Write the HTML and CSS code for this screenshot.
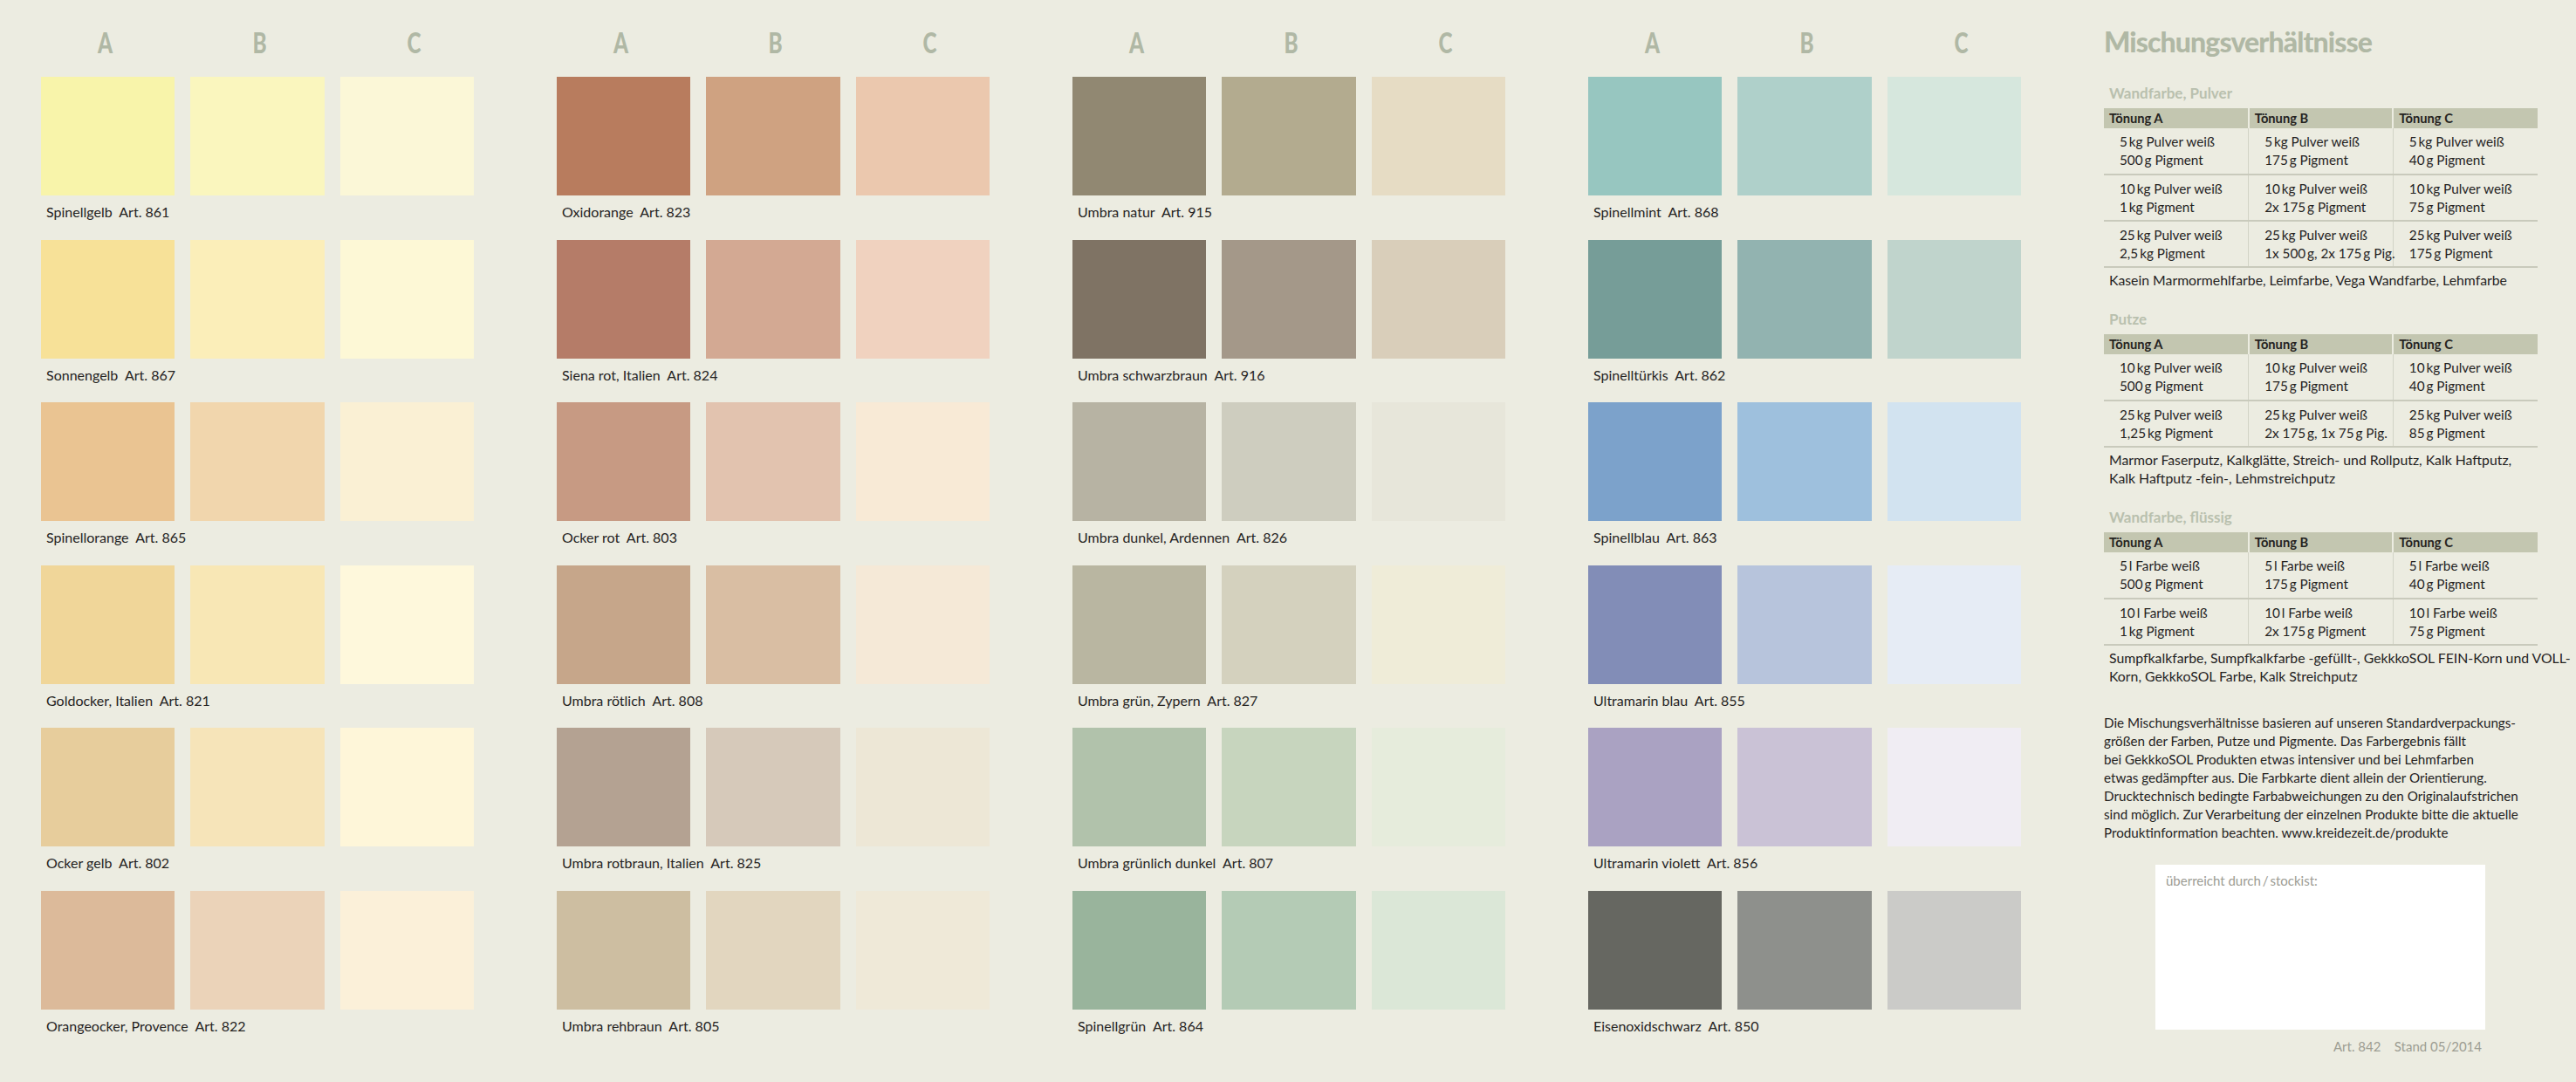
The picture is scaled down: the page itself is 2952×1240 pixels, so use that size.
FILE: index.html
```html
<!DOCTYPE html>
<html lang="de">
<head>
    <meta charset="UTF-8">
    <title>Farbkarte Mischungsverhältnisse</title>
    <link rel="stylesheet" href="styles.css">
</head>
<body>
    <div class="chart">
        <!-- Gelb und Ocker -->
        <section class="palette">
            <div class="palette-head"><span>A</span><span>B</span><span>C</span></div>
            <div class="tone-row"><div class="s861a"></div><div class="s861b"></div><div class="s861c"></div><p class="tone-name">Spinellgelb &nbsp;Art. 861</p></div>
            <div class="tone-row"><div class="s867a"></div><div class="s867b"></div><div class="s867c"></div><p class="tone-name">Sonnengelb &nbsp;Art. 867</p></div>
            <div class="tone-row"><div class="s865a"></div><div class="s865b"></div><div class="s865c"></div><p class="tone-name">Spinellorange &nbsp;Art. 865</p></div>
            <div class="tone-row"><div class="s821a"></div><div class="s821b"></div><div class="s821c"></div><p class="tone-name">Goldocker, Italien &nbsp;Art. 821</p></div>
            <div class="tone-row"><div class="s802a"></div><div class="s802b"></div><div class="s802c"></div><p class="tone-name">Ocker gelb &nbsp;Art. 802</p></div>
            <div class="tone-row"><div class="s822a"></div><div class="s822b"></div><div class="s822c"></div><p class="tone-name">Orangeocker, Provence &nbsp;Art. 822</p></div>
        </section>

        <!-- Rot und Umbra -->
        <section class="palette">
            <div class="palette-head"><span>A</span><span>B</span><span>C</span></div>
            <div class="tone-row"><div class="s823a"></div><div class="s823b"></div><div class="s823c"></div><p class="tone-name">Oxidorange &nbsp;Art. 823</p></div>
            <div class="tone-row"><div class="s824a"></div><div class="s824b"></div><div class="s824c"></div><p class="tone-name">Siena rot, Italien &nbsp;Art. 824</p></div>
            <div class="tone-row"><div class="s803a"></div><div class="s803b"></div><div class="s803c"></div><p class="tone-name">Ocker rot &nbsp;Art. 803</p></div>
            <div class="tone-row"><div class="s808a"></div><div class="s808b"></div><div class="s808c"></div><p class="tone-name">Umbra rötlich &nbsp;Art. 808</p></div>
            <div class="tone-row"><div class="s825a"></div><div class="s825b"></div><div class="s825c"></div><p class="tone-name">Umbra rotbraun, Italien &nbsp;Art. 825</p></div>
            <div class="tone-row"><div class="s805a"></div><div class="s805b"></div><div class="s805c"></div><p class="tone-name">Umbra rehbraun &nbsp;Art. 805</p></div>
        </section>

        <!-- Umbra und Grün -->
        <section class="palette">
            <div class="palette-head"><span>A</span><span>B</span><span>C</span></div>
            <div class="tone-row"><div class="s915a"></div><div class="s915b"></div><div class="s915c"></div><p class="tone-name">Umbra natur &nbsp;Art. 915</p></div>
            <div class="tone-row"><div class="s916a"></div><div class="s916b"></div><div class="s916c"></div><p class="tone-name">Umbra schwarzbraun &nbsp;Art. 916</p></div>
            <div class="tone-row"><div class="s826a"></div><div class="s826b"></div><div class="s826c"></div><p class="tone-name">Umbra dunkel, Ardennen &nbsp;Art. 826</p></div>
            <div class="tone-row"><div class="s827a"></div><div class="s827b"></div><div class="s827c"></div><p class="tone-name">Umbra grün, Zypern &nbsp;Art. 827</p></div>
            <div class="tone-row"><div class="s807a"></div><div class="s807b"></div><div class="s807c"></div><p class="tone-name">Umbra grünlich dunkel &nbsp;Art. 807</p></div>
            <div class="tone-row"><div class="s864a"></div><div class="s864b"></div><div class="s864c"></div><p class="tone-name">Spinellgrün &nbsp;Art. 864</p></div>
        </section>

        <!-- Blau, Violett, Schwarz -->
        <section class="palette">
            <div class="palette-head"><span>A</span><span>B</span><span>C</span></div>
            <div class="tone-row"><div class="s868a"></div><div class="s868b"></div><div class="s868c"></div><p class="tone-name">Spinellmint &nbsp;Art. 868</p></div>
            <div class="tone-row"><div class="s862a"></div><div class="s862b"></div><div class="s862c"></div><p class="tone-name">Spinelltürkis &nbsp;Art. 862</p></div>
            <div class="tone-row"><div class="s863a"></div><div class="s863b"></div><div class="s863c"></div><p class="tone-name">Spinellblau &nbsp;Art. 863</p></div>
            <div class="tone-row"><div class="s855a"></div><div class="s855b"></div><div class="s855c"></div><p class="tone-name">Ultramarin blau &nbsp;Art. 855</p></div>
            <div class="tone-row"><div class="s856a"></div><div class="s856b"></div><div class="s856c"></div><p class="tone-name">Ultramarin violett &nbsp;Art. 856</p></div>
            <div class="tone-row"><div class="s850a"></div><div class="s850b"></div><div class="s850c"></div><p class="tone-name">Eisenoxidschwarz &nbsp;Art. 850</p></div>
        </section>

        <!-- Mischungsverhältnisse -->
        <aside class="mixing">
            <h1>Mischungsverhältnisse</h1>

            <h2>Wandfarbe, Pulver</h2>
            <table>
                <tr><th>Tönung A</th><th>Tönung B</th><th>Tönung C</th></tr>
                <tr><td>5&thinsp;kg Pulver weiß<br>500&thinsp;g Pigment</td><td>5&thinsp;kg Pulver weiß<br>175&thinsp;g Pigment</td><td>5&thinsp;kg Pulver weiß<br>40&thinsp;g Pigment</td></tr>
                <tr><td>10&thinsp;kg Pulver weiß<br>1&thinsp;kg Pigment</td><td>10&thinsp;kg Pulver weiß<br>2x 175&thinsp;g Pigment</td><td>10&thinsp;kg Pulver weiß<br>75&thinsp;g Pigment</td></tr>
                <tr><td>25&thinsp;kg Pulver weiß<br>2,5&thinsp;kg Pigment</td><td>25&thinsp;kg Pulver weiß<br>1x 500&thinsp;g, 2x 175&thinsp;g Pig.</td><td>25&thinsp;kg Pulver weiß<br>175&thinsp;g Pigment</td></tr>
            </table>
            <p class="products">Kasein Marmormehlfarbe, Leimfarbe, Vega Wandfarbe, Lehmfarbe</p>

            <h2>Putze</h2>
            <table>
                <tr><th>Tönung A</th><th>Tönung B</th><th>Tönung C</th></tr>
                <tr><td>10&thinsp;kg Pulver weiß<br>500&thinsp;g Pigment</td><td>10&thinsp;kg Pulver weiß<br>175&thinsp;g Pigment</td><td>10&thinsp;kg Pulver weiß<br>40&thinsp;g Pigment</td></tr>
                <tr><td>25&thinsp;kg Pulver weiß<br>1,25&thinsp;kg Pigment</td><td>25&thinsp;kg Pulver weiß<br>2x 175&thinsp;g, 1x 75&thinsp;g Pig.</td><td>25&thinsp;kg Pulver weiß<br>85&thinsp;g Pigment</td></tr>
            </table>
            <p class="products">Marmor Faserputz, Kalkglätte, Streich- und Rollputz, Kalk Haftputz,<br>Kalk Haftputz -fein-, Lehmstreichputz</p>

            <h2>Wandfarbe, flüssig</h2>
            <table>
                <tr><th>Tönung A</th><th>Tönung B</th><th>Tönung C</th></tr>
                <tr><td>5&thinsp;l Farbe weiß<br>500&thinsp;g Pigment</td><td>5&thinsp;l Farbe weiß<br>175&thinsp;g Pigment</td><td>5&thinsp;l Farbe weiß<br>40&thinsp;g Pigment</td></tr>
                <tr><td>10&thinsp;l Farbe weiß<br>1&thinsp;kg Pigment</td><td>10&thinsp;l Farbe weiß<br>2x 175&thinsp;g Pigment</td><td>10&thinsp;l Farbe weiß<br>75&thinsp;g Pigment</td></tr>
            </table>
            <p class="products">Sumpfkalkfarbe, Sumpfkalkfarbe -gefüllt-, GekkkoSOL FEIN-Korn und VOLL-<br>Korn, GekkkoSOL Farbe, Kalk Streichputz</p>

            <p class="disclaimer">Die Mischungsverhältnisse basieren auf unseren Standardverpackungs-<br>größen der Farben, Putze und Pigmente. Das Farbergebnis fällt<br>bei GekkkoSOL Produkten etwas intensiver und bei Lehmfarben<br>etwas gedämpfter aus. Die Farbkarte dient allein der Orientierung.<br>Drucktechnisch bedingte Farbabweichungen zu den Originalaufstrichen<br>sind möglich. Zur Verarbeitung der einzelnen Produkte bitte die aktuelle<br>Produktinformation beachten. www.kreidezeit.de/produkte</p>

            <div class="stockist">überreicht durch&thinsp;/&thinsp;stockist:</div>
            <p class="edition">Art. 842 &nbsp; &nbsp;Stand 05/2014</p>
        </aside>
    </div>
</body>
</html>
```
FILE: styles.css
```css
* {
    margin: 0;
    padding: 0;
    box-sizing: border-box;
}

body {
    font-family: Lato, "Open Sans", sans-serif;
    font-size: 15px;
    line-height: 21px;
    color: #25231f;
    background-color: #ecece1;
}

.chart {
    display: grid;
    grid-template-columns: repeat(5, 496px);
    column-gap: 95px;
    padding: 30px 0 0 47px;
    height: 1240px;
    overflow: hidden;
}

/* Farbspalten */
.palette-head {
    display: grid;
    grid-template-columns: repeat(3, 177px);
    margin: 0 0 20px -15px;
    font-size: 32px;
    line-height: 38px;
    font-weight: 900;
    text-align: center;
    color: #b0b8a5;
}

.palette-head span {
    transform: scaleX(0.76);
}

.tone-row {
    display: grid;
    grid-template-columns: repeat(3, 1fr);
    grid-template-rows: 136px 50.6px;
    column-gap: 18px;
}

.tone-name {
    grid-column: 1 / -1;
    padding: 8px 0 0 6px;
    font-size: 16px;
    white-space: nowrap;
}

/* Rechte Spalte */
.mixing h1 {
    font-size: 32px;
    line-height: 38px;
    font-weight: 900;
    letter-spacing: -0.9px;
    color: #b0b8a5;
    margin-top: -1px;
    margin-bottom: 29px;
    white-space: nowrap;
}

.mixing h2 {
    font-size: 17px;
    line-height: 21px;
    font-weight: 700;
    color: #b9c0ae;
    padding-left: 6px;
    margin-bottom: 7px;
}

.mixing table {
    width: 497px;
    table-layout: fixed;
    border-collapse: collapse;
}

.mixing th {
    height: 23px;
    padding-left: 6px;
    text-align: left;
    line-height: 23px;
    font-size: 14.7px;
    font-weight: 700;
    background-color: #c3c6b0;
    border-left: 2px solid #ecece1;
}

.mixing td {
    height: 53px;
    padding-left: 18px;
    font-size: 15.3px;
    white-space: nowrap;
    border-left: 1px solid #d2d3c6;
    border-bottom: 2px solid #c9cabc;
}

.mixing th:first-child,
.mixing td:first-child {
    border-left: none;
}

.products {
    padding: 3px 0 0 6px;
    margin-bottom: 24px;
    font-size: 15.8px;
    white-space: nowrap;
}

.disclaimer {
    margin-top: 33px;
    font-size: 15.2px;
    white-space: nowrap;
}

.stockist {
    width: 378px;
    height: 189px;
    margin: 26px 0 0 59px;
    padding: 8px 12px;
    background-color: #fff;
    color: #9c9c94;
}

.edition {
    width: 433px;
    margin-top: 9px;
    text-align: right;
    color: #9c9d92;
}

/* Farbtöne */
.s861a { background-color: #f8f4aa; }
.s861b { background-color: #faf6be; }
.s861c { background-color: #fbf7d7; }
.s867a { background-color: #f7e198; }
.s867b { background-color: #fbeeb9; }
.s867c { background-color: #fdf8d6; }
.s865a { background-color: #eac492; }
.s865b { background-color: #f1d6ad; }
.s865c { background-color: #faf0d4; }
.s821a { background-color: #f0d699; }
.s821b { background-color: #f8e7b5; }
.s821c { background-color: #fef8dc; }
.s802a { background-color: #e7cd9c; }
.s802b { background-color: #f6e4b9; }
.s802c { background-color: #fef6d9; }
.s822a { background-color: #dcba9a; }
.s822b { background-color: #ebd3b9; }
.s822c { background-color: #fbf0d9; }

.s823a { background-color: #b87c5e; }
.s823b { background-color: #cfa281; }
.s823c { background-color: #ebc8ae; }
.s824a { background-color: #b57c68; }
.s824b { background-color: #d3a993; }
.s824c { background-color: #f0d2bf; }
.s803a { background-color: #c79a83; }
.s803b { background-color: #e2c3af; }
.s803c { background-color: #f8ead6; }
.s808a { background-color: #c6a68a; }
.s808b { background-color: #d9bea3; }
.s808c { background-color: #f5e9d7; }
.s825a { background-color: #b4a292; }
.s825b { background-color: #d6c9ba; }
.s825c { background-color: #ede7d6; }
.s805a { background-color: #cdbea1; }
.s805b { background-color: #e2d6bf; }
.s805c { background-color: #efe9d8; }

.s915a { background-color: #918872; }
.s915b { background-color: #b3ab8f; }
.s915c { background-color: #e6dcc4; }
.s916a { background-color: #7f7364; }
.s916b { background-color: #a49889; }
.s916c { background-color: #d9ceba; }
.s826a { background-color: #b7b3a3; }
.s826b { background-color: #cecdbf; }
.s826c { background-color: #e7e6da; }
.s827a { background-color: #b9b6a1; }
.s827b { background-color: #d4d1be; }
.s827c { background-color: #efecd8; }
.s807a { background-color: #b1c2ab; }
.s807b { background-color: #c7d5be; }
.s807c { background-color: #e6ecdc; }
.s864a { background-color: #99b49c; }
.s864b { background-color: #b4cbb5; }
.s864c { background-color: #dbe7d7; }

.s868a { background-color: #97c6c0; }
.s868b { background-color: #afd0ca; }
.s868c { background-color: #d6e7dd; }
.s862a { background-color: #769d98; }
.s862b { background-color: #92b3b0; }
.s862c { background-color: #c0d4cc; }
.s863a { background-color: #7ca2cb; }
.s863b { background-color: #9ec0dd; }
.s863c { background-color: #d2e3f0; }
.s855a { background-color: #828db7; }
.s855b { background-color: #b7c4dc; }
.s855c { background-color: #e6ecf5; }
.s856a { background-color: #aaa2c2; }
.s856b { background-color: #cac2d6; }
.s856c { background-color: #f0edf3; }
.s850a { background-color: #666761; }
.s850b { background-color: #8e908c; }
.s850c { background-color: #cbcbc8; }
```
